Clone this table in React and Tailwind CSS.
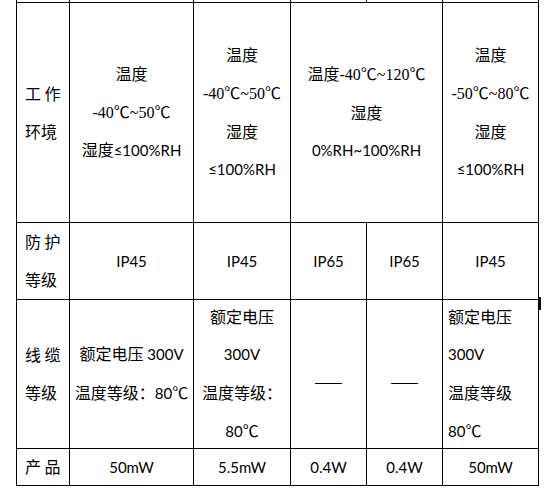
import React from "react";

const L = ({ children }) => <span className="text-[15px] font-normal font-['Lato','Noto_Sans_CJK_SC',sans-serif]">{children}</span>;
const S = ({ children }) => <span className="font-normal font-['Liberation_Serif','Noto_Sans_CJK_SC',serif]">{children}</span>;
const C = () => <span className="inline-block w-[16px] text-left font-normal font-['Noto_Sans_CJK_SC',serif] text-[16px]">℃</span>;

const Cell = ({ lines, align = "center", className = "" }) => (
  <div
    className={
      "bg-white flex flex-col justify-center " +
      (align === "left" ? "items-start pl-2 " : align === "left5" ? "items-start pl-[5px] " : "items-center ") +
      className
    }
  >
    {lines.map((l, i) => (
      <div key={i} className="leading-[37.7px] whitespace-nowrap">
        {l}
      </div>
    ))}
  </div>
);

const Blank = () => <div className="bg-white" />;

export default function App() {
  return (
    <div className="relative w-[545px] h-[492px] bg-white text-black text-[16px] font-normal font-['Noto_Sans_CJK_SC','Lato',sans-serif]">
      <div className="ml-[16px] w-max grid grid-cols-[52px_123px_96px_75px_75px_95px] grid-rows-[2px_219px_76px_148px_36px] gap-px bg-black px-px pb-px">
        {/* cut-off row */}
        <Blank />
        <Blank />
        <Blank />
        <Blank />
        <Blank />
        <Blank />

        {/* 工作环境 */}
        <Cell align="left" lines={["工 作", "环境"]} />
        <Cell lines={["温度", <S>-40<C />~50<C /></S>, <>湿度<L>≤100%RH</L></>]} />
        <Cell lines={["温度", <S>-40<C />~50<C /></S>, "湿度", <L>≤100%RH</L>]} />
        <Cell className="col-span-2" lines={[<>温度<S>-40<C />~120<C /></S></>, "湿度", <L>0%RH~100%RH</L>]} />
        <Cell lines={["温度", <S>-50<C />~80<C /></S>, "湿度", <L>≤100%RH</L>]} />

        {/* 防护等级 */}
        <Cell align="left" lines={["防 护", "等级"]} />
        <Cell lines={[<L>IP45</L>]} />
        <Cell lines={[<L>IP45</L>]} />
        <Cell lines={[<L>IP65</L>]} />
        <Cell lines={[<L>IP65</L>]} />
        <Cell lines={[<L>IP45</L>]} />

        {/* 线缆等级 */}
        <Cell align="left" lines={["线 缆", "等级"]} />
        <Cell lines={[<>额定电压<L> 300V</L></>, <>温度等级：<L>80</L><C /></>]} />
        <Cell lines={["额定电压", <L>300V</L>, "温度等级：", <><L>80</L><C /></>]} />
        <Cell className="pt-[15px]" lines={[<span className="text-[17px]">——</span>]} />
        <Cell className="pt-[15px]" lines={[<span className="text-[17px]">——</span>]} />
        <Cell align="left5" lines={["额定电压", <L>300V</L>, "温度等级", <><L>80</L><C /></>]} />

        {/* 产品 */}
        <Cell align="left" lines={["产 品"]} />
        <Cell lines={[<L>50mW</L>]} />
        <Cell lines={[<L>5.5mW</L>]} />
        <Cell lines={[<L>0.4W</L>]} />
        <Cell lines={[<L>0.4W</L>]} />
        <Cell lines={[<L>50mW</L>]} />
      </div>
      <div className="absolute left-[538px] top-[297px] w-[3px] h-[13px] bg-black" />
    </div>
  );
}
